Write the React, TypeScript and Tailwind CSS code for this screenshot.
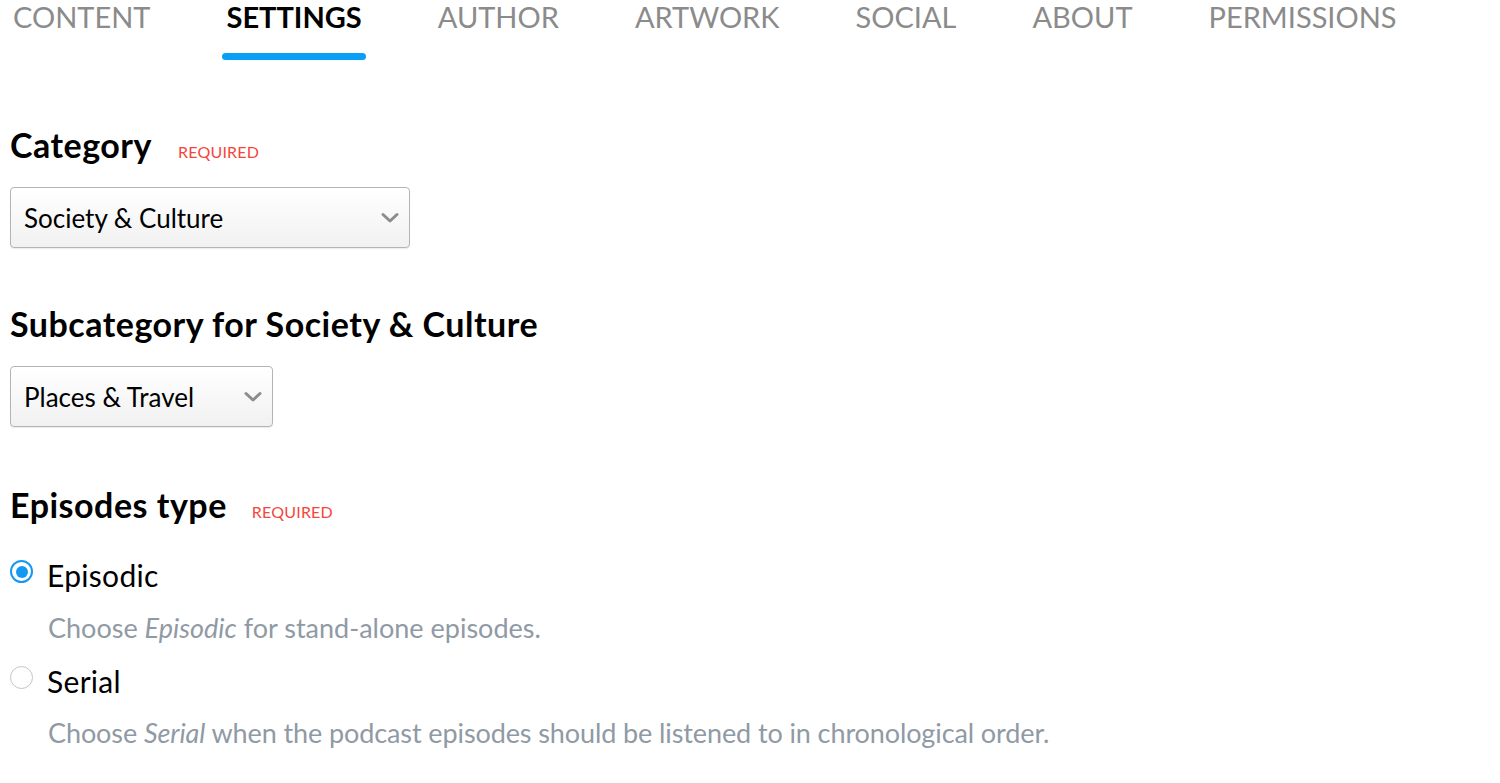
import { useState } from 'react';

const tabs = ['CONTENT', 'SETTINGS', 'AUTHOR', 'ARTWORK', 'SOCIAL', 'ABOUT', 'PERMISSIONS'];

function Chevron() {
  return (
    <svg width="18" height="12" viewBox="0 0 18 12" fill="none">
      <path d="M2 2.5l7 6.5 7-6.5" stroke="#8c8c8c" strokeWidth="3" strokeLinecap="round" strokeLinejoin="round" />
    </svg>
  );
}

function FakeSelect({ value, width }: { value: string; width: string }) {
  return (
    <div
      className={`${width} h-[61px] flex items-center justify-between pl-[13px] pr-[10px] border border-[#b4b4b4] rounded-[4px] bg-gradient-to-b from-white to-[#f1f1f1] shadow-[0_1px_1px_rgba(0,0,0,0.08)]`}
    >
      <span className="text-[26px] leading-[34px] text-black">{value}</span>
      <Chevron />
    </div>
  );
}

function Required() {
  return <span className="text-[16px] text-[#f5463c] tracking-[0.2px]">REQUIRED</span>;
}

function Radio({ checked }: { checked: boolean }) {
  return checked ? (
    <span className="mt-[3px] w-[23px] h-[23px] rounded-full border-2 border-[#1598f2] flex items-center justify-center shrink-0">
      <span className="w-[12px] h-[12px] rounded-full bg-[#1598f2]" />
    </span>
  ) : (
    <span className="mt-[3px] w-[23px] h-[23px] rounded-full border-[1.5px] border-[#c4c4c4] bg-white shrink-0" />
  );
}

export default function App() {
  const [type, setType] = useState<'episodic' | 'serial'>('episodic');

  return (
    <div className="min-h-screen bg-white text-black font-['Lato','Noto_Sans',sans-serif] pl-[10px]">
      {/* tabs */}
      <nav className="flex gap-[76px] pl-[3px]">
        {tabs.map((t) => {
          const active = t === 'SETTINGS';
          return (
            <div key={t} className="flex flex-col">
              <span
                className={
                  active
                    ? 'text-[29px] leading-[34px] font-bold text-black'
                    : 'text-[29px] leading-[34px] text-[#8b8b8b]'
                }
              >
                {t}
              </span>
              {active ? (
                <span className="mt-[19px] -mx-[4px] h-[7px] rounded-full bg-[#0a9ff7]" />
              ) : null}
            </div>
          );
        })}
      </nav>

      <section className="mt-[65px]">
        <div className="flex items-baseline gap-[26px]">
          <h2 className="text-[34px] leading-[40px] font-bold tracking-[0.5px]">Category</h2>
          <Required />
        </div>
        <div className="mt-[22px]">
          <FakeSelect value="Society & Culture" width="w-[400px]" />
        </div>
      </section>

      <section className="mt-[56px]">
        <h2 className="text-[34px] leading-[40px] font-bold tracking-[0.5px]">Subcategory for Society &amp; Culture</h2>
        <div className="mt-[22px]">
          <FakeSelect value="Places & Travel" width="w-[263px]" />
        </div>
      </section>

      <section className="mt-[58px]">
        <div className="flex items-baseline gap-[25px]">
          <h2 className="text-[34px] leading-[40px] font-bold tracking-[0.5px]">Episodes type</h2>
          <Required />
        </div>

        <label className="mt-[32px] flex items-start gap-[14px] cursor-pointer" onClick={() => setType('episodic')}>
          <Radio checked={type === 'episodic'} />
          <span className="text-[30px] leading-[36px] tracking-[0.3px]">Episodic</span>
        </label>
        <p className="mt-[18px] pl-[38px] text-[27px] leading-[34px] text-[#8f9aa5]">
          Choose <em>Episodic</em> for stand-alone episodes.
        </p>

        <label className="mt-[18px] flex items-start gap-[14px] cursor-pointer" onClick={() => setType('serial')}>
          <Radio checked={type === 'serial'} />
          <span className="text-[30px] leading-[36px] tracking-[0.3px]">Serial</span>
        </label>
        <p className="mt-[17px] pl-[38px] text-[27px] leading-[34px] text-[#8f9aa5] tracking-[-0.1px]">
          Choose <em>Serial</em> when the podcast episodes should be listened to in chronological order.
        </p>
      </section>
    </div>
  );
}
